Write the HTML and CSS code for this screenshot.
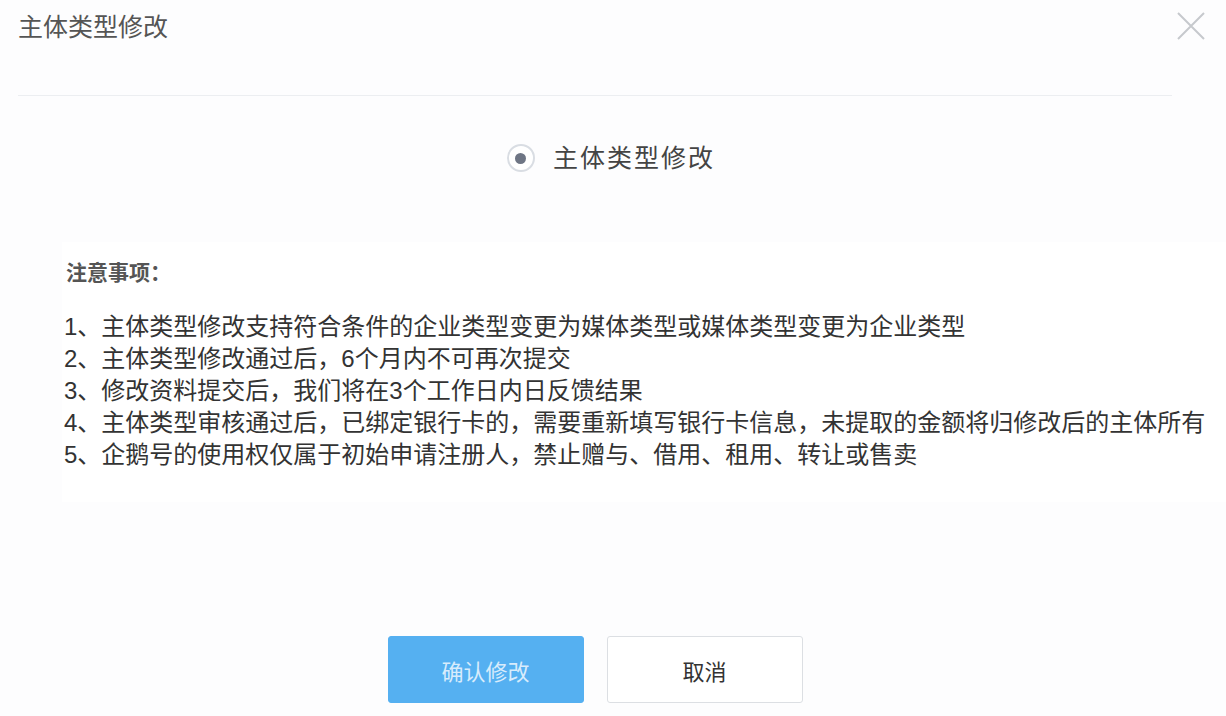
FILE: index.html
```html
<!DOCTYPE html>
<html lang="zh-CN">
<head>
    <meta charset="UTF-8">
    <title>主体类型修改</title>
    <link rel="stylesheet" href="styles.css">
</head>
<body>

    <div class="dialog">
        <!-- Header -->
        <div class="dialog-head">
            <h3 class="dialog-title">主体类型修改</h3>
            <button class="close-btn" aria-label="关闭">
                <svg width="28" height="28" viewBox="0 0 28 28">
                    <path d="M1 1 L27 27 M27 1 L1 27" stroke="#c6c9cd" stroke-width="2" fill="none"/>
                </svg>
            </button>
        </div>
        <div class="divider"></div>

        <!-- Type select -->
        <label class="type-select">
            <span class="radio"><span class="radio-dot"></span></span>
            <span class="radio-label">主体类型修改</span>
        </label>

        <!-- Notes -->
        <div class="notes">
            <div class="notes-title">注意事项：</div>
            <ul class="notes-list">
                <li>1、主体类型修改支持符合条件的企业类型变更为媒体类型或媒体类型变更为企业类型</li>
                <li>2、主体类型修改通过后，6个月内不可再次提交</li>
                <li>3、修改资料提交后，我们将在3个工作日内日反馈结果</li>
                <li>4、主体类型审核通过后，已绑定银行卡的，需要重新填写银行卡信息，未提取的金额将归修改后的主体所有</li>
                <li>5、企鹅号的使用权仅属于初始申请注册人，禁止赠与、借用、租用、转让或售卖</li>
            </ul>
        </div>

        <!-- Footer -->
        <div class="dialog-foot">
            <button class="btn btn-primary">确认修改</button>
            <button class="btn btn-default">取消</button>
        </div>
    </div>

</body>
</html>
```

FILE: styles.css
```css
body {
    margin: 0;
    background-color: #fdfdfe;
    font-family: "Liberation Sans", "Noto Sans CJK SC", sans-serif;
    color: #333;
}
.dialog {
    width: 1226px;
    height: 716px;
}
.dialog-head {
    display: flex;
    justify-content: space-between;
    align-items: flex-start;
    padding: 12px 21px 0 18px;
}
.dialog-title {
    margin: 0;
    font-size: 25px;
    line-height: 30px;
    font-weight: normal;
    color: #555;
}
.close-btn {
    width: 28px;
    height: 28px;
    padding: 0;
    border: none;
    background: none;
    cursor: pointer;
}
.close-btn svg {
    display: block;
}
.divider {
    height: 1px;
    margin: 53px 54px 0 18px;
    background-color: #eceef1;
}
.type-select {
    display: flex;
    justify-content: center;
    align-items: center;
    margin-top: 47px;
    padding-right: 4px;
    gap: 18px;
    cursor: pointer;
}
.radio {
    display: flex;
    justify-content: center;
    align-items: center;
    width: 24px;
    height: 24px;
    border: 2px solid #d9dde3;
    border-radius: 50%;
    background-color: #fff;
}
.radio-dot {
    width: 11px;
    height: 11px;
    border-radius: 50%;
    background-color: #6e7584;
}
.radio-label {
    font-size: 25px;
    line-height: 30px;
    letter-spacing: 2px;
    color: #444;
}
.notes {
    margin: 69px 0 0 62px;
    padding: 16px 0 31px 2px;
    background-color: #fff;
}
.notes-title {
    margin-left: 2px;
    font-size: 21px;
    line-height: 30px;
    font-weight: bold;
    color: #555;
}
.notes-list {
    margin: 23px 0 0;
    padding: 0;
    list-style: none;
}
.notes-list li {
    font-size: 24px;
    line-height: 32px;
    white-space: nowrap;
    color: #333;
}
.dialog-foot {
    display: flex;
    justify-content: center;
    gap: 23px;
    margin: 134px 54px 0 18px;
}
.btn {
    width: 196px;
    height: 67px;
    border-radius: 3px;
    font-family: "Liberation Sans", "Noto Sans CJK SC", sans-serif;
    font-size: 22px;
    cursor: pointer;
}
.btn-primary {
    border: 1px solid #55b0f1;
    background-color: #55b0f1;
    color: #d8ecfc;
}
.btn-default {
    border: 1px solid #dcdfe3;
    background-color: #fff;
    color: #333;
}
```
